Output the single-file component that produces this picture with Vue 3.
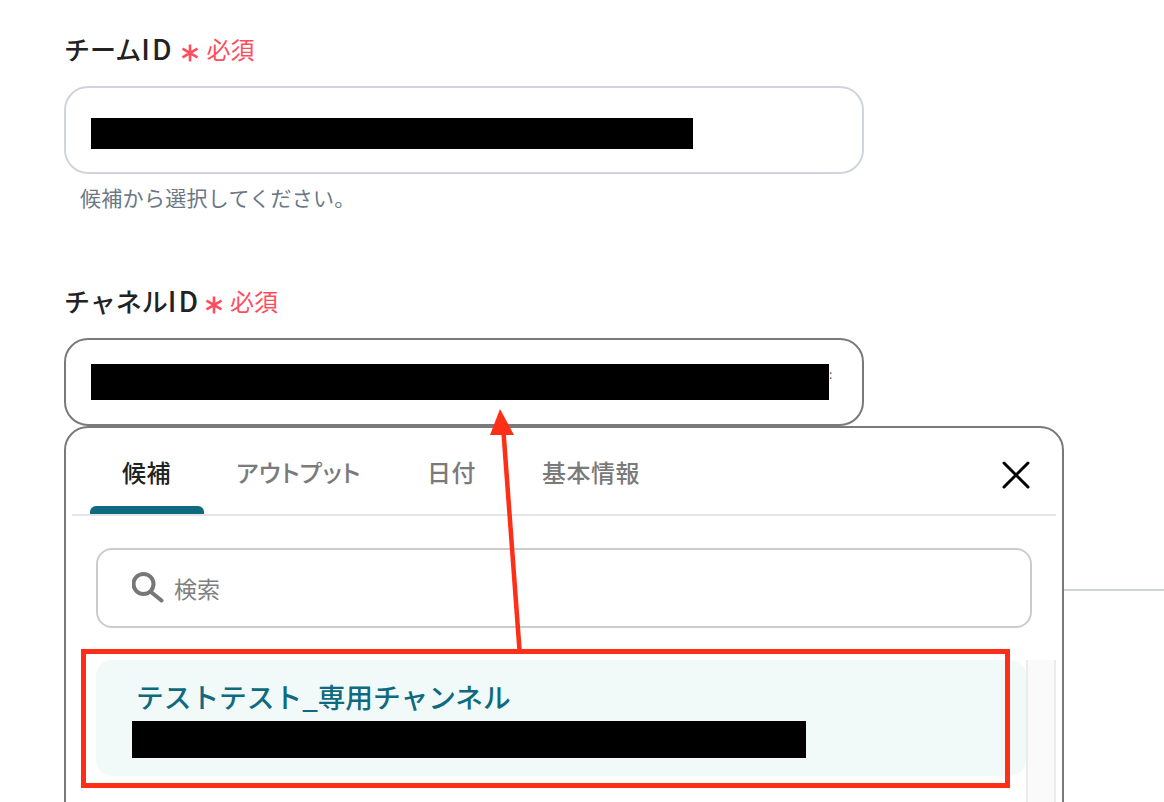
<template>
  <div class="page">
    <section class="field">
      <div class="field__label">
        <span>チーム<span class="field__id">ID</span></span>
        <svg class="field__mark" width="18" height="18" viewBox="0 0 18 18" fill="none">
          <path d="M9 0.5V17.5M1.5 4.6L16.5 13.4M16.5 4.6L1.5 13.4" stroke="currentColor" stroke-width="2.6" />
        </svg>
        <span class="field__required">必須</span>
      </div>
      <div class="field__input">
        <div class="redact redact--team"></div>
      </div>
      <p class="field__hint">候補から選択してください。</p>
    </section>

    <section class="field field--channel">
      <div class="field__label">
        <span>チャネル<span class="field__id">ID</span></span>
        <svg class="field__mark" width="18" height="18" viewBox="0 0 18 18" fill="none">
          <path d="M9 0.5V17.5M1.5 4.6L16.5 13.4M16.5 4.6L1.5 13.4" stroke="currentColor" stroke-width="2.6" />
        </svg>
        <span class="field__required">必須</span>
      </div>
      <div class="field__input field__input--focus">
        <div class="redact redact--channel"></div>
        <span class="field__overflow">:</span>
      </div>

      <div class="picker">
        <div class="picker__head">
          <button
            v-for="tab in tabs"
            :key="tab"
            type="button"
            class="picker__tab"
            :class="{ 'is-active': tab === activeTab }"
          >
            {{ tab }}
          </button>
          <button type="button" class="picker__close">
            <svg width="28" height="28" viewBox="0 0 28 28" fill="none">
              <path d="M2 2L26 26M26 2L2 26" stroke="#000" stroke-width="3" stroke-linecap="round" />
            </svg>
          </button>
        </div>

        <div class="picker__search">
          <svg width="32" height="32" viewBox="0 0 32 32" fill="none">
            <circle cx="11.5" cy="12" r="10" stroke="#777" stroke-width="4" />
            <path d="M19 20L29.5 28.5" stroke="#777" stroke-width="4" stroke-linecap="round" />
          </svg>
          <span>検索</span>
        </div>

        <div class="picker__body">
          <div class="picker__list">
            <div class="picker__item is-selected">
              <div class="picker__name">テストテスト_専用チャンネル</div>
              <div class="redact redact--item"></div>
            </div>
            <div class="picker__item picker__item--next">
              <div class="picker__name picker__name--plain">提案チャンネル</div>
            </div>
          </div>
          <div class="picker__scroll"></div>
        </div>
      </div>
    </section>

    <div class="divider"></div>

    <svg class="notes" width="1164" height="802" viewBox="0 0 1164 802" fill="none">
      <rect x="83.5" y="651.5" width="924" height="134" stroke="#ff2e17" stroke-width="5" />
      <path d="M519.5 650L503.5 432" stroke="#ff2e17" stroke-width="4.5" />
      <path d="M500 409L514 435L490 435Z" fill="#ff2e17" />
    </svg>
  </div>
</template>

<script setup>
const tabs = ['候補', 'アウトプット', '日付', '基本情報']
const activeTab = '候補'
</script>

<style>
html,
body {
  margin: 0;
  background: #fff;
  overflow: hidden;
}
</style>

<style scoped>
.page {
  position: relative;
  width: 1164px;
  height: 802px;
  padding-top: 30px;
  box-sizing: border-box;
  overflow: hidden;
  background: #fff;
  color: #222;
  font-family: "Noto Sans CJK JP", "Noto Sans", sans-serif;
}

.field {
  position: relative;
  width: 800px;
  margin-left: 64px;
}

.field--channel {
  margin-top: 70px;
}

.field__label {
  height: 40px;
  padding-bottom: 3px;
  box-sizing: border-box;
  display: flex;
  align-items: center;
  font-size: 26px;
  font-weight: 500;
  line-height: 37px;
}

.field__id {
  font-size: 28px;
  letter-spacing: 2px;
}

.field__mark {
  margin: 9px 7px 0 8px;
  color: #ff4d5e;
}

.field--channel .field__mark {
  margin-left: 5px;
}

.field__required {
  color: #ff4d5e;
  font-size: 24px;
  font-weight: 400;
}

.field__input {
  position: relative;
  height: 88px;
  margin-top: 16px;
  padding: 30px 0 0 25px;
  box-sizing: border-box;
  border: 2px solid #d0d5dd;
  border-radius: 24px;
  background: #fff;
}

.field__input--focus {
  padding-top: 24px;
  border-color: #7a7a7a;
  display: flex;
  align-items: flex-start;
}

.field__overflow {
  margin-top: 2px;
  font-size: 12px;
  line-height: 16px;
  color: #556;
}

.field__hint {
  margin: 8px 0 0 16px;
  color: #6b7785;
  font-size: 21px;
  letter-spacing: 0.3px;
  line-height: 30px;
}

.redact {
  background: #000;
}

.redact--team {
  width: 602px;
  height: 31px;
}

.redact--channel {
  width: 738px;
  height: 36px;
}

.redact--item {
  width: 674px;
  height: 37px;
  margin: 8px 0 0 -4px;
}

.picker {
  position: absolute;
  top: 144px;
  left: 0;
  width: 1000px;
  height: 520px;
  box-sizing: border-box;
  border: 2px solid #7a7a7a;
  border-radius: 24px;
  background: #fff;
}

.picker__head {
  height: 88px;
  margin: 0 6px;
  padding-left: 18px;
  box-sizing: border-box;
  display: flex;
  border-bottom: 2px solid #e5e5e5;
}

.picker__tab {
  position: relative;
  height: 86px;
  margin-right: 2px;
  padding: 2px 32px 0;
  box-sizing: border-box;
  border: none;
  background: none;
  color: #7a7a7a;
  font: inherit;
  font-size: 24px;
  font-weight: 500;
  line-height: 34px;
  font-feature-settings: "palt";
  letter-spacing: 0.5px;
}

.picker__tab:first-child {
  margin-right: 1px;
}

.picker__tab.is-active {
  color: #222;
}

.picker__tab.is-active::after {
  content: "";
  position: absolute;
  left: 0;
  right: -1px;
  bottom: 0;
  height: 8px;
  border-radius: 6px 6px 0 0;
  background: #0f6a80;
}

.picker__close {
  margin: 33px 26px 0 auto;
  padding: 0;
  width: 28px;
  height: 28px;
  border: none;
  background: none;
}

.picker__search {
  width: 936px;
  height: 80px;
  margin: 32px 0 0 30px;
  padding-left: 34px;
  box-sizing: border-box;
  display: flex;
  align-items: center;
  gap: 10px;
  border: 2px solid #ccc;
  border-radius: 16px;
  color: #808080;
  font-size: 23px;
}

.picker__body {
  display: flex;
  margin: 32px 6px 0 30px;
}

.picker__list {
  flex: 1;
  min-width: 0;
}

.picker__item {
  padding: 19px 0 0 40px;
  box-sizing: border-box;
  height: 116px;
  border-radius: 16px;
}

.picker__item--next {
  padding-top: 22px;
}

.picker__item.is-selected {
  background: #f2faf9;
}

.picker__name {
  color: #0f6a80;
  font-size: 27.7px;
  font-weight: 500;
  line-height: 34px;
}

.picker__name--plain {
  color: #333;
  font-weight: 400;
}

.picker__scroll {
  width: 30px;
  box-sizing: border-box;
  border-left: 2px solid #ececec;
  border-right: 2px solid #ececec;
  background: #fafafa;
}

.divider {
  height: 2px;
  margin: 163px 0 0 64px;
  background: #cfd4da;
}

.notes {
  position: absolute;
  top: 0;
  left: 0;
  pointer-events: none;
}
</style>
